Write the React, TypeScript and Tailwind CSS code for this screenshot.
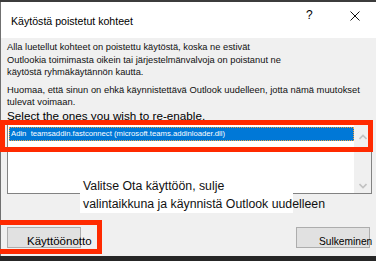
import React from "react";

const font = { fontFamily: '"Liberation Sans", Arial, sans-serif' };

export default function App() {
  return (
    <div
      className="relative w-[376px] h-[261px] overflow-hidden bg-[#f0f0f0] flex flex-col text-black"
      style={font}
    >
      {/* window top edge */}
      <div className="h-[2px] bg-[#3c3c3c]" />

      <div className="flex-1 flex flex-col border-l border-[#707070]">
        {/* title bar */}
        <div className="h-[36px] bg-white flex items-start relative">
          <span className="mt-[12px] ml-[10px] text-[10.6px] leading-[14px] whitespace-nowrap">
            Käytöstä poistetut kohteet
          </span>
          <span className="absolute left-[305px] top-[6px] text-[12px] leading-[14px]">?</span>
          <svg
            className="absolute left-[349px] top-[9px]"
            width="10"
            height="10"
            viewBox="0 0 10 10"
          >
            <path d="M0.5 0.5 L9.5 9.5 M9.5 0.5 L0.5 9.5" stroke="#111" strokeWidth="1" fill="none" />
          </svg>
        </div>

        {/* body */}
        <div className="flex-1 flex flex-col pl-[6px] pr-[4px] pt-[3px]">
          <div className="text-[9.3px] leading-[12.5px] whitespace-nowrap text-[#111]">
            <div>Alla luetellut kohteet on poistettu käytöstä, koska ne estivät</div>
            <div>Outlookia toimimasta oikein tai järjestelmänvalvoja on poistanut ne</div>
            <div>käytöstä ryhmäkäytännön kautta.</div>
          </div>
          <div className="mt-[5px] text-[9.4px] leading-[12.5px] whitespace-nowrap text-[#111]">
            <div>Huomaa, että sinun on ehkä käynnistettävä Outlook uudelleen, jotta nämä muutokset</div>
            <div>tulevat voimaan.</div>
          </div>
          <div className="text-[11.7px] leading-[13px] whitespace-nowrap">
            Select the ones you wish to re-enable.
          </div>

          {/* list box */}
          <div className="mt-[2.5px] w-[365px] h-[70px] border border-[#828282] flex">
            <div className="flex-1 bg-white pt-[2px] pl-[1px]">
              <div className="h-[14px] bg-[#0078d7] border border-dotted border-[#f0a040] pl-[1px] flex items-center">
                <span className="text-[7.7px] leading-[10px] text-white whitespace-nowrap">
                  Adin&nbsp;&nbsp;teamsaddin.fastconnect (microsoft.teams.addinloader.dll)
                </span>
              </div>
            </div>
            <div className="w-[17px] bg-[#f0f0f0] flex flex-col justify-between items-center pt-[9px] pb-[4.5px]">
              <svg width="8" height="6" viewBox="0 0 8 6">
                <path d="M0.5 5 L4 1.5 L7.5 5" stroke="#c2c2c2" strokeWidth="1.6" fill="none" />
              </svg>
              <svg width="8" height="6" viewBox="0 0 8 6">
                <path d="M0.5 1 L4 4.5 L7.5 1" stroke="#c2c2c2" strokeWidth="1.6" fill="none" />
              </svg>
            </div>
          </div>

          {/* buttons */}
          <div className="mt-[33px] flex justify-between pr-[2px]">
            <div className="w-[74px] h-[21px] bg-[#e1e1e1] border border-[#adadad] pl-[19px] pt-[7px] text-[11.5px] leading-[13px] whitespace-nowrap">
              Käyttöönotto
            </div>
            <div className="w-[74px] h-[21px] bg-[#e1e1e1] border border-[#adadad] pl-[22px] pt-[7px] text-[10.2px] leading-[13px] whitespace-nowrap">
              Sulkeminen
            </div>
          </div>
        </div>
      </div>

      {/* window bottom edge */}
      <div className="h-[5px] bg-[#262626]" />

      {/* annotation: instruction note */}
      <div className="absolute left-[80px] top-[180px] w-[213px] h-[33px] bg-white">
        <div className="-mt-[3px] pl-[3px] text-[12.3px] leading-[18px] whitespace-nowrap text-[#111]">
          <div>Valitse Ota käyttöön, sulje</div>
          <div>valintaikkuna ja käynnistä Outlook uudelleen</div>
        </div>
      </div>

      {/* annotation: red highlight boxes */}
      <div className="absolute left-0 top-[120px] w-[373px] h-[32px] border-[5px] border-[#ff2a00]" />
      <div className="absolute -left-[5px] top-[220px] w-[107px] h-[34px] border-[5px] border-[#ff2a00]" />
    </div>
  );
}
